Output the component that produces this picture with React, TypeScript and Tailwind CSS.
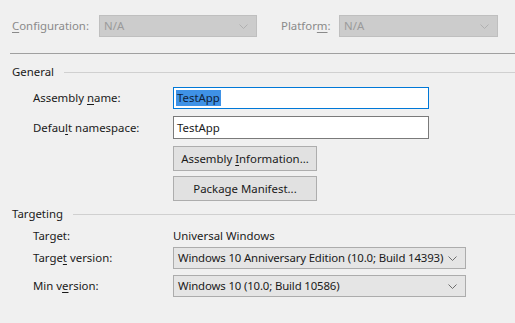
import React from "react";

const Chevron = ({ color }: { color: string }) => (
    <svg width="9" height="5" viewBox="0 0 9 5" fill="none">
        <path d="M0.5 0.5 L4.5 4.5 L8.5 0.5" stroke={color} strokeWidth="1" />
    </svg>
);

const Key = ({ children }: { children: React.ReactNode }) => (
    <span className="underline underline-offset-2">{children}</span>
);

const DisabledCombo = ({ width }: { width: string }) => (
    <div className={`${width} h-[22px] flex items-center justify-between pl-[4px] pr-[8px] bg-[#cccccc] border border-[#bfbfbf] text-[#9a9a9a]`}>
        <span>N/A</span>
        <Chevron color="#b0b0b0" />
    </div>
);

const Combo = ({ text }: { text: string }) => (
    <div className="w-[293px] h-[22px] flex items-center justify-between pl-[4px] pr-[8px] bg-[#e5e5e5] border border-[#acacac] text-[#1a1a1a]">
        <span className="whitespace-nowrap tracking-[-0.15px]">{text}</span>
        <Chevron color="#6d6d6d" />
    </div>
);

const GroupHeader = ({ title }: { title: string }) => (
    <div className="flex items-center pl-[12px] h-[16px]">
        <span className="mr-[10px]">{title}</span>
        <div className="flex-1 h-px bg-[#d0d0d0]" />
    </div>
);

const Row = ({ label, children, className }: { label: React.ReactNode; children: React.ReactNode; className?: string }) => (
    <div className={`flex items-center pl-[33px] ${className ?? ""}`}>
        <div className="w-[140px] whitespace-nowrap">{label}</div>
        {children}
    </div>
);

export default function App() {
    return (
        <div
            className="w-[515px] h-[323px] bg-[#f0f0f0] text-[11.4px] leading-[16px] text-[#1a1a1a] overflow-hidden"
            style={{ fontFamily: '"Noto Sans", "Open Sans", sans-serif' }}
        >
            <div className="flex items-center pt-[15px] pl-[12px]">
                <div className="w-[87px] text-[#8a8a8a]">
                    <Key>C</Key>onfiguration:
                </div>
                <DisabledCombo width="w-[158px]" />
                <div className="w-[58px] ml-[24px] text-[#8a8a8a]">
                    Platfor<Key>m</Key>:
                </div>
                <DisabledCombo width="w-[159px]" />
            </div>
            <div className="mt-[16px] ml-[10px] h-px bg-[#a0a0a0]" />

            <div className="mt-[10px]">
                <GroupHeader title="General" />
            </div>
            <Row className="mt-[7px]" label={<>Assembly <Key>n</Key>ame:</>}>
                <div className="w-[256px] h-[22px] flex items-center px-[2px] bg-white border border-[#0078d7]">
                    <span className="bg-[#3f92e6] text-[#10223a] px-[1px]">TestApp</span>
                </div>
            </Row>
            <Row className="mt-[7px]" label={<>Defau<Key>l</Key>t namespace:</>}>
                <div className="w-[256px] h-[23px] flex items-center px-[3px] bg-white border border-[#7a7a7a]">
                    TestApp
                </div>
            </Row>
            <div className="flex flex-col gap-[5px] mt-[7px] pl-[173px]">
                <button className="w-[144px] h-[25px] bg-[#e1e1e1] border border-[#adadad] text-[#1a1a1a]">
                    Assembly <Key>I</Key>nformation...
                </button>
                <button className="w-[144px] h-[25px] bg-[#e1e1e1] border border-[#adadad] text-[#1a1a1a]">
                    Package Manifest...
                </button>
            </div>

            <div className="mt-[5px]">
                <GroupHeader title="Targeting" />
            </div>
            <Row className="mt-[6px]" label="Target:">
                <span>Universal Windows</span>
            </Row>
            <Row className="mt-[3px]" label={<>Targe<Key>t</Key> version:</>}>
                <Combo text="Windows 10 Anniversary Edition (10.0; Build 14393)" />
            </Row>
            <Row className="mt-[6px]" label={<>Min v<Key>e</Key>rsion:</>}>
                <Combo text="Windows 10 (10.0; Build 10586)" />
            </Row>
        </div>
    );
}
